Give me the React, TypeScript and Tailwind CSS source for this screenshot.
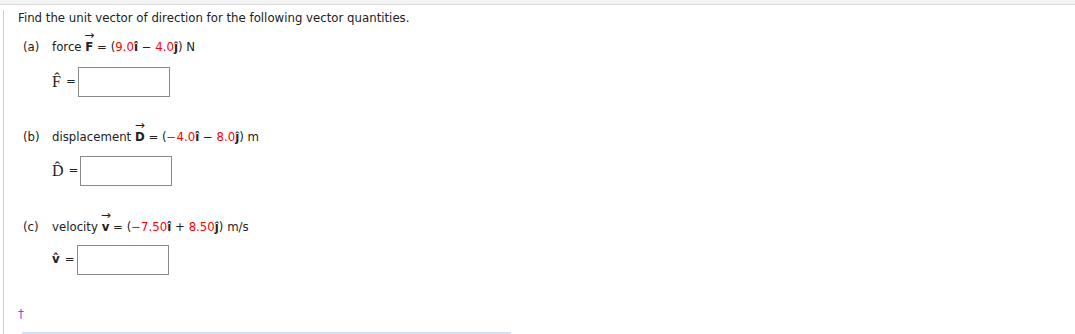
import React from 'react';

const sans = { fontFamily: '"DejaVu Sans", Verdana, sans-serif' };
const serif = { fontFamily: '"Liberation Serif", "Times New Roman", serif' };

function Vec({ ch }: { ch: string }) {
  return (
    <span className="relative inline-block font-bold">
      <span className="absolute left-[-1px] right-[-1px] -top-[10px] text-center text-[12px] font-normal leading-none">→</span>
      {ch}
    </span>
  );
}

const Red = ({ children }: { children: React.ReactNode }) => <span className="text-[#ff0000]">{children}</span>;

function Part({
  tag,
  children,
  label,
  mt,
  boxMt,
}: {
  tag: string;
  children: React.ReactNode;
  label: React.ReactNode;
  mt: string;
  boxMt: string;
}) {
  return (
    <>
      <div className={`flex h-[16px] items-center leading-[16px] pl-[5px] ${mt}`}>
        <span className="w-[29px]">({tag})</span>
        <span className="whitespace-pre">{children}</span>
      </div>
      <div className={`flex items-center pl-[34px] ${boxMt}`}>
        <span className="flex items-center gap-[5px] pr-[2px]">
          {label}
          <span>=</span>
        </span>
        <div className="h-[30px] w-[92px] border border-[#8a8a8a] bg-white" />
      </div>
    </>
  );
}

export default function App() {
  return (
    <div className="w-[1075px] h-[334px] overflow-hidden bg-white text-[11.75px] text-[#222]" style={sans}>
      <div className="h-[5px] bg-[#f4f4f4] border-b border-[#dcdcdc]" />
      <div className="ml-[3px] border-l border-[#cfcfcf] pl-[14px] h-[329px]">
        <div className="h-[16px] leading-[16px] mt-[5px]">
          Find the unit vector of direction for the following vector quantities.
        </div>

        <Part
          tag="a"
          mt="mt-[13px]"
          boxMt="mt-[12px]"
          label={<span className="text-[16px] leading-[16px]" style={serif}>{'F\u0302'}</span>}
        >
          force <Vec ch="F" /> = (<Red>9.0</Red><b>î</b> − <Red>4.0</Red><b>ĵ</b>) N
        </Part>

        <Part
          tag="b"
          mt="mt-[32px]"
          boxMt="mt-[11px]"
          label={<span className="text-[16px] leading-[16px]" style={serif}>{'D\u0302'}</span>}
        >
          displacement <Vec ch="D" /> = (<Red>−4.0</Red><b>î</b> − <Red>8.0</Red><b>ĵ</b>) m
        </Part>

        <Part
          tag="c"
          mt="mt-[33px]"
          boxMt="mt-[10px]"
          label={<span className="font-bold">{'v\u0302'}</span>}
        >
          velocity <Vec ch="v" /> = (<Red>−7.50</Red><b>î</b> + <Red>8.50</Red><b>ĵ</b>) m/s
        </Part>

        <div className="mt-[31px] h-[16px] leading-[16px] text-[#7a4fe0]">†</div>
        <div className="mt-[10px] ml-[4px] h-[2px] w-[489px] bg-[#d6dff7]" />
      </div>
    </div>
  );
}
